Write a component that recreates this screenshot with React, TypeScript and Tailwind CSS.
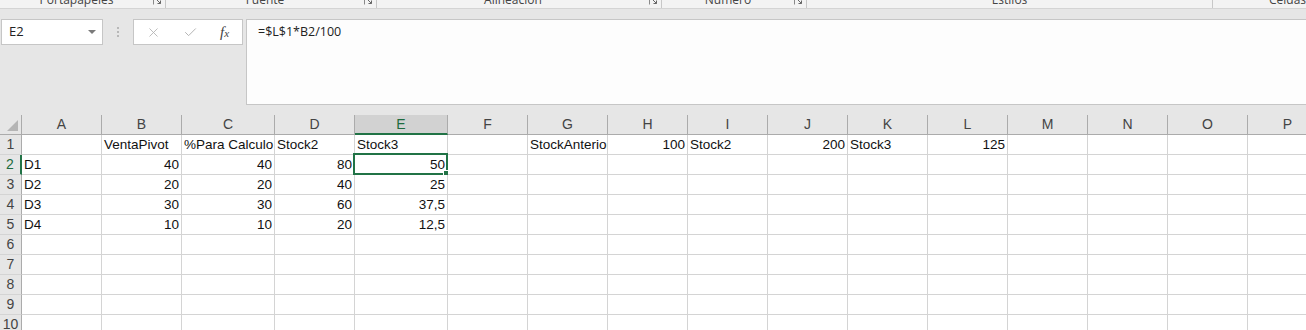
import { X, Check } from "lucide-react";

const GROUPS = [
  { label: "Portapapeles", w: "w-[166px]", launcher: true },
  { label: "Fuente", w: "w-[211px]", launcher: true },
  { label: "Alineación", w: "w-[285px]", launcher: true },
  { label: "Número", w: "w-[145px]", launcher: true },
  { label: "Estilos", w: "w-[406px]", launcher: false },
  { label: "Celdas", w: "w-[150px]", launcher: false },
];

const COLS = [
  { id: "A", w: "w-[80px]" },
  { id: "B", w: "w-[80px]" },
  { id: "C", w: "w-[93px]" },
  { id: "D", w: "w-[80px]" },
  { id: "E", w: "w-[93px]" },
  { id: "F", w: "w-[80px]" },
  { id: "G", w: "w-[80px]" },
  { id: "H", w: "w-[80px]" },
  { id: "I", w: "w-[80px]" },
  { id: "J", w: "w-[80px]" },
  { id: "K", w: "w-[80px]" },
  { id: "L", w: "w-[80px]" },
  { id: "M", w: "w-[80px]" },
  { id: "N", w: "w-[80px]" },
  { id: "O", w: "w-[80px]" },
  { id: "P", w: "w-[80px]" },
];

const DATA: Record<number, Record<string, string | number>> = {
  1: {
    B: "VentaPivot",
    C: "%Para Calculo",
    D: "Stock2",
    E: "Stock3",
    G: "StockAnterior",
    H: 100,
    I: "Stock2",
    J: 200,
    K: "Stock3",
    L: 125,
  },
  2: { A: "D1", B: 40, C: 40, D: 80, E: 50 },
  3: { A: "D2", B: 20, C: 20, D: 40, E: 25 },
  4: { A: "D3", B: 30, C: 30, D: 60, E: "37,5" },
  5: { A: "D4", B: 10, C: 10, D: 20, E: "12,5" },
};

const ROWS = [1, 2, 3, 4, 5, 6, 7, 8, 9, 10];

function isNum(v: string | number) {
  return typeof v === "number" || /^[\d,]+$/.test(v);
}

function Launcher() {
  return (
    <svg width="9" height="9" viewBox="0 0 9 9" className="-mt-[4px] shrink-0">
      <path d="M0.5 8.5V0.5H8.5" fill="none" stroke="#8a8a8a" strokeWidth="1" />
      <path d="M3 3L7.5 7.5M4.5 7.5H7.5V4.5" fill="none" stroke="#666" strokeWidth="1" />
    </svg>
  );
}

export default function App() {
  return (
    <div className="w-[1306px] h-[330px] overflow-hidden bg-[#e6e6e6] font-['Liberation_Sans',sans-serif]">
      {/* ribbon group labels, cut off at the top */}
      <div className="flex h-[9px] bg-[#f3f3f3] border-b border-[#d4d4d4] overflow-hidden">
        {GROUPS.map((g) => (
          <div
            key={g.label}
            className={`${g.w} shrink-0 flex items-start border-r border-[#c8c8c8]`}
          >
            <div className="flex-1 text-center -mt-[6px] text-[12px] leading-[12px] text-[#444] font-['Open_Sans',sans-serif] whitespace-nowrap">
              {g.label}
            </div>
            {g.launcher && (
              <div className="pr-[3px]">
                <Launcher />
              </div>
            )}
          </div>
        ))}
      </div>

      {/* formula bar */}
      <div className="flex items-start pt-[10px] font-['Open_Sans',sans-serif]">
        <div className="ml-[1px] w-[102px] h-[26px] shrink-0 border border-[#c6c6c6] bg-white flex items-center justify-between pl-[7px] pr-[6px]">
          <span className="text-[13px] text-[#222]">E2</span>
          <svg width="8" height="4" viewBox="0 0 8 4">
            <path d="M0 0H8L4 4Z" fill="#7a7a7a" />
          </svg>
        </div>
        <div className="w-[30px] h-[26px] shrink-0 flex flex-col items-center justify-center gap-[2px]">
          <div className="w-[2px] h-[2px] bg-[#b8b8b8]" />
          <div className="w-[2px] h-[2px] bg-[#b8b8b8]" />
          <div className="w-[2px] h-[2px] bg-[#b8b8b8]" />
        </div>
        <div className="w-[110px] h-[26px] shrink-0 border border-[#c6c6c6] bg-white flex items-center pl-[12px] gap-[22px]">
          <X size={15} strokeWidth={1.4} className="text-[#b4b4b4]" />
          <Check size={15} strokeWidth={1.6} className="text-[#b4b4b4]" />
          <span className="font-['Liberation_Serif',serif] italic text-[15px] text-[#444] leading-none">
            f<span className="text-[11px]">x</span>
          </span>
        </div>
        <div className="ml-[3px] flex-1 h-[86px] border-l border-t border-b border-[#c6c6c6] bg-[#fdfdfd] pl-[11px] pt-[3px] text-[12.5px] leading-[18px] text-[#222]">
          =$L$1*B2/100
        </div>
      </div>

      {/* grid */}
      <div className="mt-[10px] text-[13.5px] text-[#111]">
        <div className="flex h-[20px] text-[14px]">
          <div className="w-[22px] shrink-0 border-r border-b border-[#ababab] flex items-end justify-end pr-[3px] pb-[3px]">
            <svg width="11" height="11" viewBox="0 0 11 11">
              <path d="M11 0V11H0Z" fill="#b5b5b5" />
            </svg>
          </div>
          {COLS.map((c) => (
            <div
              key={c.id}
              className={
                c.id === "E"
                  ? `${c.w} shrink-0 border-r border-b-2 border-r-[#ababab] border-b-[#217346] bg-[#d2d2d2] flex items-center justify-center text-[#1e6b3f] leading-[18px]`
                  : `${c.w} shrink-0 border-r border-b border-[#ababab] flex items-center justify-center text-[#444] leading-[19px]`
              }
            >
              {c.id}
            </div>
          ))}
        </div>
        {ROWS.map((r) => (
          <div key={r} className="flex h-[20px]">
            <div
              className={
                r === 2
                  ? "w-[22px] shrink-0 border-r-2 border-b border-r-[#217346] border-b-[#d4d4d4] flex items-center justify-center text-[14px] text-[#1e6b3f] leading-[19px]"
                  : "w-[22px] shrink-0 border-r border-b border-r-[#ababab] border-b-[#d4d4d4] flex items-center justify-center text-[14px] text-[#444] leading-[19px]"
              }
            >
              {r}
            </div>
            {COLS.map((c) => {
              const v = DATA[r]?.[c.id];
              const selected = r === 2 && c.id === "E";
              return (
                <div
                  key={c.id}
                  className={`${c.w} shrink-0 relative border-r border-b border-[#d4d4d4] bg-white px-[2px] leading-[19px] whitespace-nowrap ${
                    v !== undefined && isNum(v) ? "text-right" : "text-left overflow-hidden"
                  }`}
                >
                  {v}
                  {selected && (
                    <>
                      <div className="absolute -left-[2px] -top-[2px] -right-[1px] -bottom-[1px] border-2 border-[#217346]" />
                      <div className="absolute -right-[3px] -bottom-[3px] w-[7px] h-[7px] bg-[#217346] border border-white" />
                    </>
                  )}
                </div>
              );
            })}
          </div>
        ))}
      </div>
    </div>
  );
}
